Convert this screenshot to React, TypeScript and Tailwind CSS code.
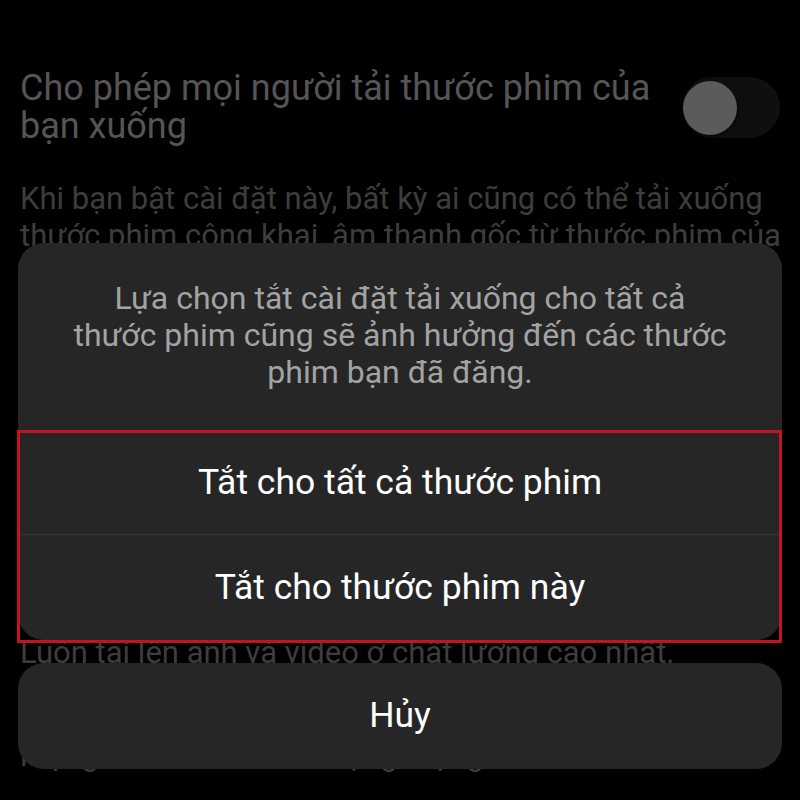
import React from 'react'

const font = "font-['Roboto','Noto_Sans','Liberation_Sans',sans-serif]"

function Toggle() {
  return (
    <div className="flex h-[61px] w-[98px] shrink-0 items-center rounded-full bg-[#0f0f0f] pl-px">
      <div className="h-[54px] w-[54px] rounded-full bg-[#5b5b5b] shadow-[0_2px_6px_rgba(0,0,0,0.6)]" />
    </div>
  )
}

export default function App() {
  return (
    <div className={`relative h-[800px] w-[800px] overflow-hidden bg-black ${font}`}>
      {/* settings page, dimmed behind the sheet */}
      <div className="px-5 pt-[69px]">
        <div className="flex items-start justify-between">
          <p className="whitespace-nowrap text-[36px] leading-[38px] text-[#555555]">
            Cho phép mọi người tải thước phim của
            <br />
            bạn xuống
          </p>
          <div className="mt-[8px]">
            <Toggle />
          </div>
        </div>
        <p className="mt-[35px] whitespace-nowrap text-[31px] leading-[37px] text-[#3d3d3d]">
          Khi bạn bật cài đặt này, bất kỳ ai cũng có thể tải xuống
          <br />
          thước phim công khai, âm thanh gốc từ thước phim của
          <br />
          bạn và các nội dung khác.
        </p>
        <div className="mt-[140px] flex items-start justify-between">
          <p className="text-[36px] leading-[38px] text-[#555555]">Tải lên ở chất lượng cao nhất</p>
          <Toggle />
        </div>
        <p className="mt-[142px] whitespace-nowrap text-[31px] leading-[37px] text-[#3d3d3d]">
          Luôn tải lên ảnh và video ở chất lượng cao nhất.
        </p>
        <p className="mt-[29px] whitespace-nowrap text-[31px] leading-[37px] text-[#3d3d3d]">
          Khi tắt, chúng tôi sẽ điều chỉnh chất
          <br />
          lượng tải lên theo tình trạng mạng.
        </p>
      </div>

      {/* action sheet */}
      <div className="absolute inset-0 flex flex-col justify-end gap-[23px] px-[18px] pb-[31px]">
        <div className="overflow-hidden rounded-[26px] bg-[#262626]">
          <p className="whitespace-nowrap pt-[37px] pb-[40px] text-center text-[32px] leading-[37px] text-[#a3a3a3]">
            Lựa chọn tắt cài đặt tải xuống cho tất cả
            <br />
            thước phim cũng sẽ ảnh hưởng đến các thước
            <br />
            phim bạn đã đăng.
          </p>
          <div className="h-px bg-[#363636]" />
          <button className="flex h-[102px] w-full items-center justify-center text-[35.5px] text-white">
            Tắt cho tất cả thước phim
          </button>
          <div className="h-px bg-[#363636]" />
          <button className="flex h-[105px] w-full items-center justify-center text-[35.5px] text-white">
            Tắt cho thước phim này
          </button>
        </div>
        <button className="flex h-[106px] w-full items-center justify-center rounded-[26px] bg-[#262626] text-[35.5px] text-white">
          Hủy
        </button>
      </div>

      {/* highlight box */}
      <div className="pointer-events-none absolute left-[17px] top-[430px] h-[213px] w-[765px] border-[3px] border-[#c3151d]" />
    </div>
  )
}
